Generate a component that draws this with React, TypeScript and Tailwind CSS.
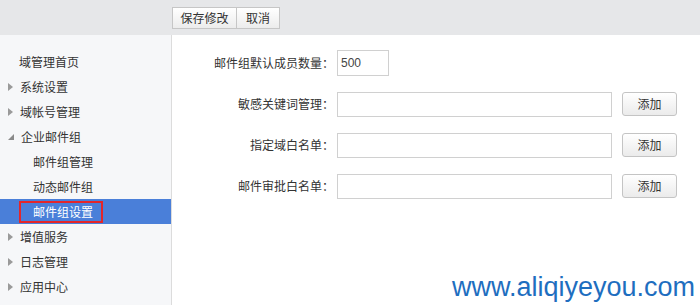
import React from "react";

const menu = [
  { label: "域管理首页", kind: "plain" },
  { label: "系统设置", kind: "closed" },
  { label: "域帐号管理", kind: "closed" },
  { label: "企业邮件组", kind: "open" },
  { label: "邮件组管理", kind: "child" },
  { label: "动态邮件组", kind: "child" },
  { label: "邮件组设置", kind: "active" },
  { label: "增值服务", kind: "closed" },
  { label: "日志管理", kind: "closed" },
  { label: "应用中心", kind: "closed" },
];

const fields = [
  { label: "邮件组默认成员数量：", value: "500", short: true },
  { label: "敏感关键词管理：" },
  { label: "指定域白名单：" },
  { label: "邮件审批白名单：" },
];

function Arrow({ open }: { open: boolean }) {
  return open ? (
    <svg width="6" height="6" viewBox="0 0 6 6" className="shrink-0">
      <path d="M6 0 L6 6 L0 6 Z" fill="#8a8a8a" />
    </svg>
  ) : (
    <svg width="5" height="8" viewBox="0 0 5 8" className="shrink-0">
      <path d="M0 0 L5 4 L0 8 Z" fill="#9a9a9a" />
    </svg>
  );
}

export default function App() {
  return (
    <div
      className="relative w-[700px] h-[305px] overflow-hidden bg-white text-[12px] text-[#333]"
      style={{ fontFamily: '"Noto Sans CJK SC", "Liberation Sans", sans-serif' }}
    >
      {/* Toolbar */}
      <div className="h-[35px] bg-[#e6e7e9] pl-[172px] pt-[7px]">
        <div className="flex h-[22px]">
          <button className="w-[65px] h-full border border-[#c6c6c6] bg-gradient-to-b from-white to-[#ececec] text-[12px] text-[#333] leading-none">
            保存修改
          </button>
          <button className="w-[43px] h-full border border-l-0 border-[#c6c6c6] bg-gradient-to-b from-white to-[#ececec] text-[12px] text-[#333] leading-none">
            取消
          </button>
        </div>
      </div>

      <div className="flex h-[270px]">
        {/* Sidebar */}
        <aside className="w-[172px] shrink-0 bg-[#f6f7f9] border-r border-[#dcdcdc] pt-[14px]">
          {menu.map((m) => {
            if (m.kind === "active") {
              return (
                <div key={m.label} className="h-[25px] bg-[#4a7fd9] flex items-center">
                  <div className="ml-[19px] h-[22px] w-[84px] border-2 border-[#e3262b] pl-[12px] flex items-center text-white">
                    {m.label}
                  </div>
                </div>
              );
            }
            return (
              <div key={m.label} className="h-[25px] flex items-center">
                {m.kind === "plain" && <span className="pl-[19px]">{m.label}</span>}
                {m.kind === "child" && <span className="pl-[33px]">{m.label}</span>}
                {(m.kind === "closed" || m.kind === "open") && (
                  <div className="flex items-center pl-[8px] gap-[7px]">
                    <Arrow open={m.kind === "open"} />
                    <span>{m.label}</span>
                  </div>
                )}
              </div>
            );
          })}
        </aside>

        {/* Main */}
        <main className="flex-1 pt-[15px] flex flex-col gap-[15px]">
          {fields.map((f) => (
            <div key={f.label} className="flex items-center h-[26px]">
              <label className="w-[162px] text-right">{f.label}</label>
              <div className="w-[3px]" />
              {f.short ? (
                <div className="w-[52px] h-[26px] border border-[#d0d0d0] flex items-center pl-[3px] text-[12px] text-[#444]" style={{ fontFamily: '"Liberation Sans", sans-serif' }}>
                  {f.value}
                </div>
              ) : (
                <>
                  <div className="w-[275px] h-[25px] border border-[#d0d0d0] bg-white" />
                  <button className="ml-[10px] w-[55px] h-[24px] rounded-[3px] border border-[#c4c4c4] bg-gradient-to-b from-white to-[#ebebeb] text-[12px] text-[#333] leading-none">
                    添加
                  </button>
                </>
              )}
            </div>
          ))}
        </main>
      </div>

      {/* Watermark */}
      <div
        className="absolute left-[452px] top-[274px] text-[27px] text-[#1e6ebf] leading-none"
        style={{ fontFamily: '"Liberation Sans", Arial, sans-serif' }}
      >
        www.aliqiyeyou.com
      </div>
    </div>
  );
}
